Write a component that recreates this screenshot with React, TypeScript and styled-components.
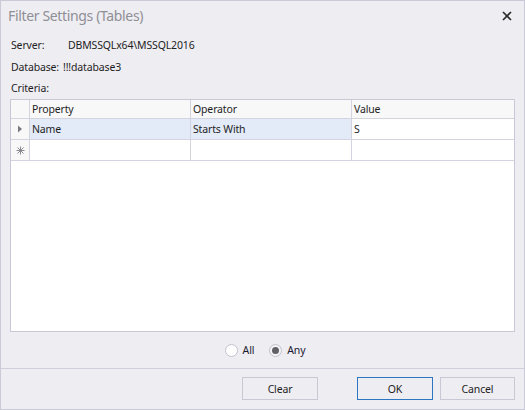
import React from "react";
import styled, { createGlobalStyle } from "styled-components";

const Global = createGlobalStyle`
  html, body { margin: 0; padding: 0; background: #eeedf2; }
  * { box-sizing: border-box; }
`;

const FONT = `"Noto Sans", "Open Sans", sans-serif`;

const Window = styled.div`
  width: 525px;
  height: 410px;
  border: 1px solid #c9c9d8;
  background: #eeedf2;
  display: flex;
  flex-direction: column;
  font-family: ${FONT};
  font-size: 10.5px;
  letter-spacing: -0.15px;
  color: #1e1e1e;
`;

const TitleBar = styled.div`
  height: 33px;
  flex: none;
  display: flex;
  align-items: flex-start;
  justify-content: space-between;
  padding: 5px 10px 0 7px;
`;

const Title = styled.div`
  font-size: 14px;
  letter-spacing: -0.35px;
  line-height: 20px;
  color: #8f8f96;
`;

const CloseButton = styled.div`
  width: 14px;
  height: 14px;
  margin-top: 3px;
  display: flex;
  align-items: center;
  justify-content: center;
`;

const Content = styled.div`
  flex: 1;
  display: flex;
  flex-direction: column;
  padding: 0 9px;
  min-height: 0;
`;

const InfoRow = styled.div<{ $h?: number }>`
  height: ${(p) => p.$h ?? 22}px;
  display: flex;
  align-items: center;
  padding-left: 1px;
  flex: none;
`;

const Label = styled.span<{ $w?: number; $gap?: number }>`
  width: ${(p) => (p.$w ? `${p.$w}px` : "auto")};
  margin-right: ${(p) => p.$gap ?? 0}px;
  flex: none;
  white-space: nowrap;
`;

const Grid = styled.div`
  margin-top: 1px;
  flex: 1;
  border: 1px solid #c8c8d6;
  background: #ffffff;
  display: grid;
  grid-template-columns: 19px 161px 161px 1fr;
  grid-auto-rows: min-content;
  align-content: start;
`;

const Cell = styled.div<{ $kind: "header" | "sel" | "plain" | "ind"; $h: number; $last?: boolean }>`
  height: ${(p) => p.$h}px;
  border-bottom: 1px solid #d4d4e0;
  border-right: ${(p) => (p.$last ? "none" : "1px solid #d4d4e0")};
  background: ${(p) =>
    p.$kind === "header" ? "#f8f8f9" : p.$kind === "sel" ? "#e2ebf7" : p.$kind === "ind" ? "#f8f8f9" : "#ffffff"};
  display: flex;
  align-items: center;
  justify-content: ${(p) => (p.$kind === "ind" ? "center" : "flex-start")};
  padding-left: ${(p) => (p.$kind === "ind" ? 0 : 2)}px;
  white-space: nowrap;
  overflow: hidden;
`;

const RadioRow = styled.div`
  height: 36px;
  flex: none;
  display: flex;
  align-items: center;
  justify-content: center;
  gap: 15px;
  padding-left: 5px;
`;

const RadioItem = styled.label`
  display: flex;
  align-items: center;
  gap: 5px;
  color: #1a1a30;
`;

const RadioCircle = styled.span<{ $checked?: boolean }>`
  width: 13px;
  height: 13px;
  border-radius: 50%;
  border: 1px solid #c2c2cc;
  background: ${(p) => (p.$checked ? "#f4f4f6" : "#ffffff")};
  display: flex;
  align-items: center;
  justify-content: center;
  &::after {
    content: "";
    display: ${(p) => (p.$checked ? "block" : "none")};
    width: 7px;
    height: 7px;
    border-radius: 50%;
    background: #616166;
  }
`;

const Separator = styled.div`
  height: 1px;
  flex: none;
  background: #cfcfdc;
`;

const ButtonBar = styled.div`
  height: 40px;
  flex: none;
  display: flex;
  align-items: flex-start;
  padding: 8px 9px 0 0;
`;

const Button = styled.button<{ $primary?: boolean; $w: number; $ml: number }>`
  width: ${(p) => p.$w}px;
  height: 23px;
  margin-left: ${(p) => p.$ml}px;
  border: 1px solid ${(p) => (p.$primary ? "#2c76c2" : "#c9c9d6")};
  background: #eeedf2;
  font-family: ${FONT};
  font-size: 10.5px;
  letter-spacing: -0.15px;
  color: #1e1e1e;
  padding: 0;
`;

const Arrow = () => (
  <svg width="6" height="8" viewBox="0 0 6 8">
    <path d="M1 0.5 L5 4 L1 7.5 Z" fill="#7a7a80" />
  </svg>
);

const NewRow = () => (
  <svg width="9" height="9" viewBox="0 0 9 9" stroke="#8a8a90" strokeWidth="1">
    <line x1="4.5" y1="0.5" x2="4.5" y2="8.5" />
    <line x1="0.5" y1="4.5" x2="8.5" y2="4.5" />
    <line x1="1.5" y1="1.5" x2="7.5" y2="7.5" />
    <line x1="7.5" y1="1.5" x2="1.5" y2="7.5" />
  </svg>
);

const CloseIcon = () => (
  <svg width="10" height="10" viewBox="0 0 10 10" stroke="#2b2b2b" strokeWidth="1.7">
    <line x1="1" y1="1" x2="9" y2="9" />
    <line x1="9" y1="1" x2="1" y2="9" />
  </svg>
);

export default function App() {
  return (
    <>
      <Global />
      <Window>
        <TitleBar>
          <Title>Filter Settings (Tables)</Title>
          <CloseButton>
            <CloseIcon />
          </CloseButton>
        </TitleBar>
        <Content>
          <InfoRow>
            <Label $w={57}>Server:</Label>
            <span>DBMSSQLx64\MSSQL2016</span>
          </InfoRow>
          <InfoRow>
            <Label $gap={4}>Database:</Label>
            <span>!!!database3</span>
          </InfoRow>
          <InfoRow $h={20}>
            <Label>Criteria:</Label>
          </InfoRow>
          <Grid>
            <Cell $kind="ind" $h={19} />
            <Cell $kind="header" $h={19}>Property</Cell>
            <Cell $kind="header" $h={19}>Operator</Cell>
            <Cell $kind="header" $h={19} $last>Value</Cell>

            <Cell $kind="ind" $h={21}><Arrow /></Cell>
            <Cell $kind="sel" $h={21}>Name</Cell>
            <Cell $kind="sel" $h={21}>Starts With</Cell>
            <Cell $kind="plain" $h={21} $last>S</Cell>

            <Cell $kind="ind" $h={21}><NewRow /></Cell>
            <Cell $kind="plain" $h={21} />
            <Cell $kind="plain" $h={21} />
            <Cell $kind="plain" $h={21} $last />
          </Grid>
          <RadioRow>
            <RadioItem>
              <RadioCircle />
              All
            </RadioItem>
            <RadioItem>
              <RadioCircle $checked />
              Any
            </RadioItem>
          </RadioRow>
        </Content>
        <Separator />
        <ButtonBar>
          <Button $w={76} $ml={241}>Clear</Button>
          <Button $w={76} $ml={39} $primary>OK</Button>
          <Button $w={75} $ml={7}>Cancel</Button>
        </ButtonBar>
      </Window>
    </>
  );
}
